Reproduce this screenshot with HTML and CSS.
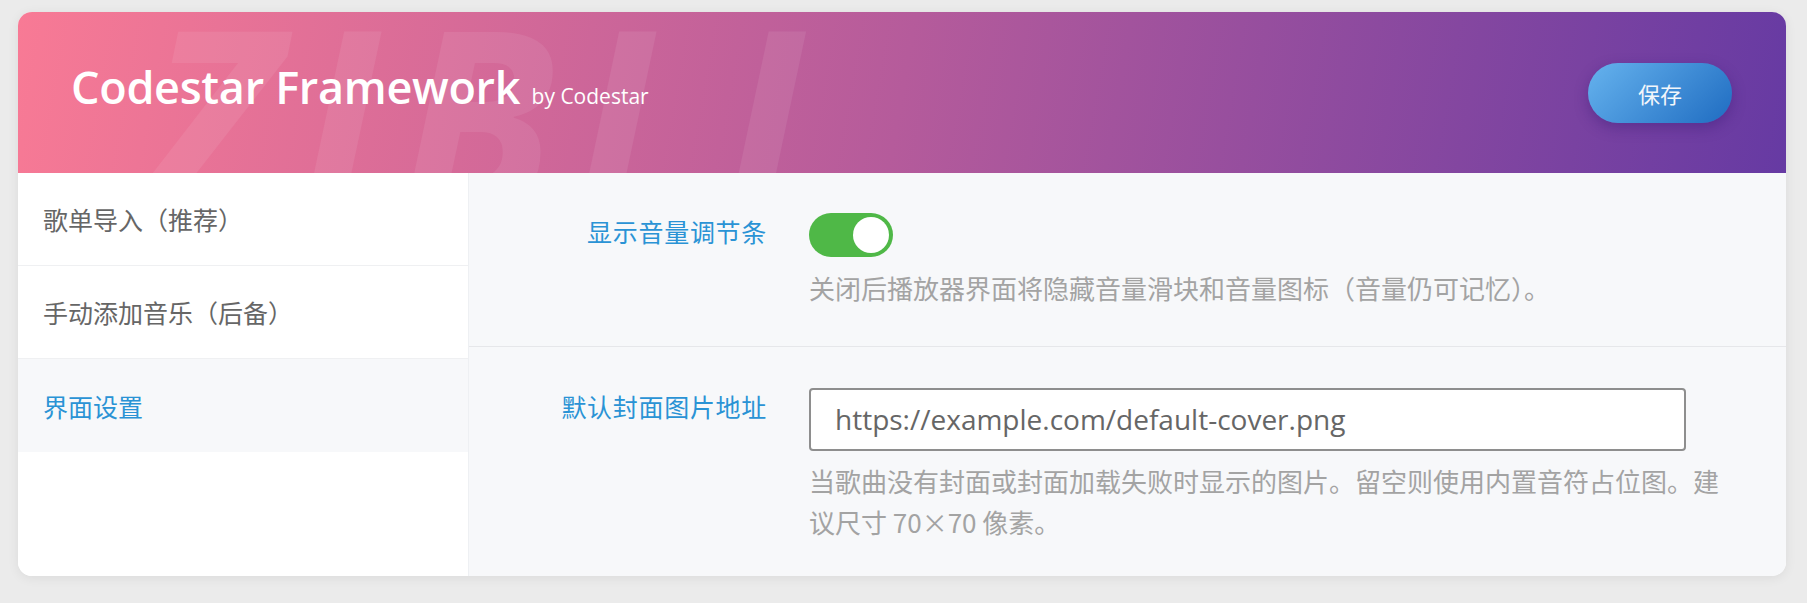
FILE: index.html
```html
<!DOCTYPE html>
<html lang="zh-CN">
<head>
    <meta charset="UTF-8">
    <meta name="viewport" content="width=device-width, initial-scale=1.0">
    <title>Codestar Framework</title>
    <link rel="stylesheet" href="styles.css">
</head>
<body>
    <div class="panel">
        <div class="panel-header">
            <span class="watermark" aria-hidden="true">ZIBLL</span>
            <h1 class="panel-title">Codestar Framework <small>by Codestar</small></h1>
            <button class="btn-save">保存</button>
        </div>

        <div class="panel-body">
            <div class="panel-nav">
                <a class="nav-item">歌单导入（推荐）</a>
                <a class="nav-item">手动添加音乐（后备）</a>
                <a class="nav-item active">界面设置</a>
            </div>

            <div class="panel-content">
                <div class="field">
                    <div class="field-title">显示音量调节条</div>
                    <div class="field-body">
                        <span class="switch on"><span class="knob"></span></span>
                        <p class="field-desc">关闭后播放器界面将隐藏音量滑块和音量图标（音量仍可记忆）。</p>
                    </div>
                </div>
                <div class="field">
                    <div class="field-title">默认封面图片地址</div>
                    <div class="field-body">
                        <input class="text-input" type="text" value="https://example.com/default-cover.png">
                        <p class="field-desc">当歌曲没有封面或封面加载失败时显示的图片。留空则使用内置音符占位图。建议尺寸 70×70 像素。</p>
                    </div>
                </div>
            </div>
        </div>
    </div>
</body>
</html>
```

FILE: styles.css
```css
* { margin: 0; padding: 0; box-sizing: border-box; }
body {
    font-family: "Open Sans", "Noto Sans CJK SC", sans-serif;
    background: #ebebeb;
    padding: 12px 21px 27px 18px;
}
.panel {
    background: white;
    border-radius: 14px;
    box-shadow: 0 2px 12px rgba(0,0,0,0.07);
    overflow: hidden;
}
.panel-header {
    position: relative;
    height: 161px;
    display: flex;
    align-items: center;
    justify-content: space-between;
    padding: 0 54px 0 53px;
    background: linear-gradient(100deg, #f87a95 0%, #b55b9b 50%, #663aa3 100%);
    overflow: hidden;
}
/* decorative letters behind the title, clipped by the header */
.watermark {
    position: absolute;
    left: 128px;
    top: -24px;
    height: 185px;
    overflow: hidden;
    font-size: 250px;
    font-weight: 700;
    font-style: italic;
    letter-spacing: 20px;
    color: rgba(255,255,255,0.08);
    line-height: 1;
    pointer-events: none;
}
.panel-title {
    position: relative;
    margin-top: -12px;
    color: white;
    font-size: 45px;
    font-weight: 600;
    letter-spacing: -0.3px;
}
.panel-title small {
    font-size: 21px;
    font-weight: 400;
    letter-spacing: 0;
}
.btn-save {
    position: relative;
    width: 144px;
    height: 60px;
    border: none;
    border-radius: 30px;
    background: linear-gradient(135deg, #66b3ee, #1f6cc1);
    color: #f2f6fb;
    font-family: "Noto Sans CJK SC", sans-serif;
    font-size: 22px;
    box-shadow: 0 5px 14px rgba(50,20,110,0.35);
    cursor: pointer;
}
.panel-body {
    display: flex;
    min-height: 403px;
}
.panel-nav {
    width: 451px;
    flex-shrink: 0;
    background: white;
    border-right: 1px solid #eef0f3;
}
.nav-item {
    display: flex;
    align-items: center;
    height: 93px;
    padding-left: 25px;
    border-bottom: 1px solid #eff0f2;
    font-family: "Noto Sans CJK SC", sans-serif;
    font-size: 25px;
    color: #666;
    cursor: pointer;
}
.nav-item.active {
    background: #f7f8fa;
    color: #2a93d5;
    border-bottom: none;
}
.panel-content {
    flex: 1;
    background: #f7f8fa;
}
.field {
    display: flex;
    gap: 42px;
    padding: 40px 40px 37px;
}
.field + .field { padding: 41px 40px 28px; }
.field:first-child { border-bottom: 1px solid #e6e7ea; }
.field-title {
    width: 258px;
    flex-shrink: 0;
    text-align: right;
    font-family: "Noto Sans CJK SC", sans-serif;
    font-size: 25px;
    letter-spacing: 0.7px;
    line-height: 1.5;
    color: #2a93d5;
}
.field-body { width: 925px; }
.switch {
    display: flex;
    justify-content: flex-end;
    align-items: center;
    width: 84px;
    height: 44px;
    padding: 4px;
    border-radius: 22px;
    background: #4fb847;
}
.knob {
    width: 36px;
    height: 36px;
    border-radius: 50%;
    background: white;
}
.field-desc {
    margin-top: 10px;
    font-family: "Noto Sans CJK SC", sans-serif;
    font-size: 26px;
    line-height: 1.6;
    color: #a3a3a3;
}
.text-input {
    display: block;
    width: 877px;
    height: 63px;
    padding: 0 24px;
    border: 2px solid #8e8e8e;
    border-radius: 4px;
    background: white;
    font-family: "Open Sans", sans-serif;
    font-size: 28px;
    color: #666;
}
.text-input + .field-desc { margin-top: 9px; }
```
